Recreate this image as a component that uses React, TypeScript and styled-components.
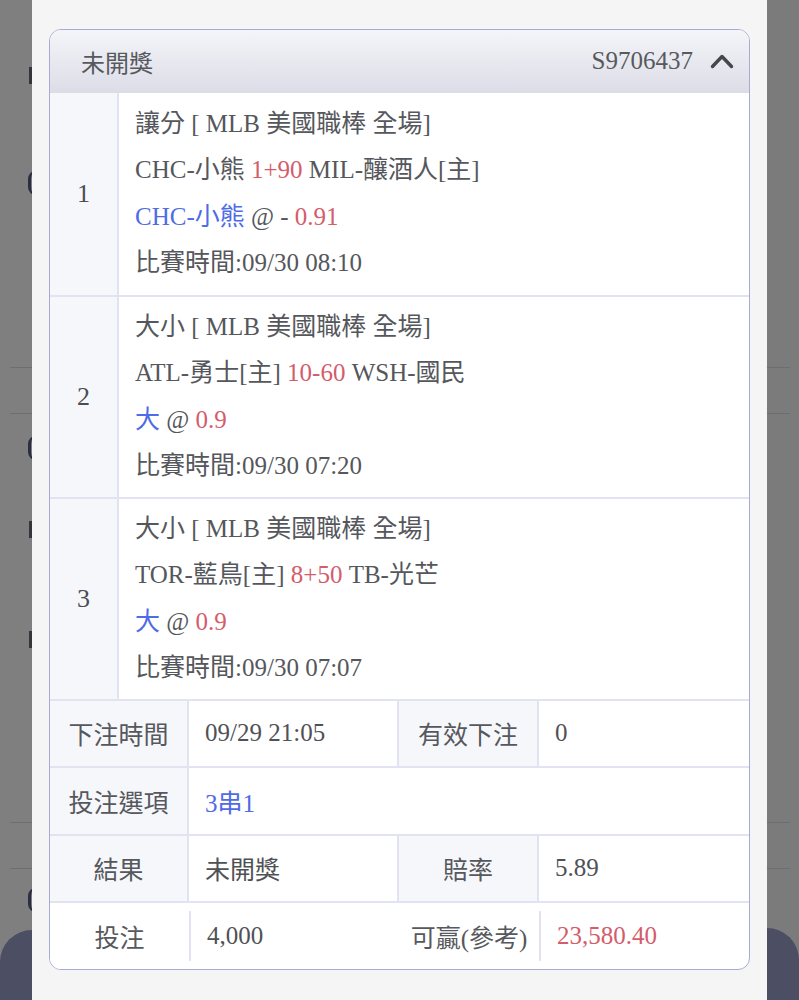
import React from "react";
import styled, { createGlobalStyle } from "styled-components";

const GlobalStyle = createGlobalStyle`
  html, body {
    margin: 0;
    padding: 0;
  }

  body {
    font-family: "Liberation Serif", "Noto Sans CJK TC", serif;
    background: #7e7e7e;
  }

  * {
    box-sizing: border-box;
  }
`;

const RED = "#d35d6b";
const BLUE = "#4f6be6";
const TEXT = "#55575c";
const LINE = "#e1e3f3";

const StyledPage = styled.div`
  display: flex;
  height: 1000px;
  overflow: hidden;
`;

const StyledStrip = styled.div<{ $side: "left" | "right" }>`
  width: 32px;
  flex-shrink: 0;
  display: flex;
  flex-direction: column;
  overflow: hidden;
  background: ${(p) => (p.$side === "left" ? "#7f7f7f" : "#7b7b7c")};
`;

/* bits of the page under the overlay, peeking out beside the sheet */
const StyledPeek = styled.div<{ $gap: number; $kind: "stem" | "curve" }>`
  margin-top: ${(p) => p.$gap}px;
  margin-left: ${(p) => (p.$kind === "curve" ? "28px" : "29px")};
  flex-shrink: 0;
  width: ${(p) => (p.$kind === "curve" ? "8px" : "3px")};
  height: ${(p) => (p.$kind === "curve" ? "24px" : "17px")};
  border-left: ${(p) =>
    p.$kind === "curve" ? "3px solid #2b2e40" : "none"};
  border-radius: ${(p) => (p.$kind === "curve" ? "12px 0 0 12px" : "0")};
  background: ${(p) => (p.$kind === "curve" ? "transparent" : "#34353a")};
`;

const StyledBand = styled.div<{ $gap: number; $side: "left" | "right" }>`
  margin-top: ${(p) => p.$gap}px;
  height: 47px;
  flex-shrink: 0;
  border-top: 1px solid #6d6e75;
  border-bottom: 1px solid #6d6e75;
  margin-left: ${(p) => (p.$side === "left" ? "10px" : "0")};
  margin-right: ${(p) => (p.$side === "right" ? "9px" : "0")};
`;

const StyledBackButton = styled.div<{ $side: "left" | "right"; $height: number }>`
  margin-top: auto;
  height: ${(p) => p.$height}px;
  flex-shrink: 0;
  background: #4c4f64;
  border-top-left-radius: ${(p) => (p.$side === "left" ? "40px" : "0")};
  border-top-right-radius: ${(p) => (p.$side === "right" ? "40px" : "0")};
`;

const StyledSheet = styled.div`
  flex: 1;
  background: #f5f5f6;
  padding: 29px 17px 0 17px;
`;

const StyledCard = styled.div`
  background: #fff;
  border: 1.5px solid #a6aad5;
  border-radius: 12px;
  overflow: hidden;
  color: ${TEXT};
  font-size: 25px;
`;

const StyledHeader = styled.div`
  height: 62.5px;
  display: flex;
  align-items: center;
  justify-content: space-between;
  padding: 0 15px 0 31px;
  background: linear-gradient(180deg, #f4f5f8 0%, #e8e9f0 50%, #dbdce6 100%);
`;

const StyledHeaderTitle = styled.span`
  font-size: 24px;
  color: #57595e;
`;

const StyledHeaderRight = styled.div`
  display: flex;
  align-items: center;
  gap: 17px;
  color: #57595e;
  font-size: 25px;
`;

const StyledChevron = styled.svg`
  width: 24px;
  height: 16px;
  display: block;
`;

const StyledLegRow = styled.div<{ $first?: boolean }>`
  display: grid;
  grid-template-columns: 69px 1fr;
  border-top: ${(p) => (p.$first ? "none" : `2px solid ${LINE}`)};
`;

const StyledLegIndex = styled.div`
  display: flex;
  align-items: center;
  justify-content: center;
  background: #f6f7fb;
  border-right: 2px solid ${LINE};
  font-size: 26px;
  color: #4c4d52;
`;

const StyledLegBody = styled.div<{ $first?: boolean }>`
  padding: ${(p) => (p.$first ? "8px" : "7px")} 0 ${(p) => (p.$first ? "8px" : "7px")} 16px;
`;

const StyledLine = styled.div`
  line-height: 46.5px;
  height: 46.5px;
  white-space: nowrap;
`;

const StyledTone = styled.span<{ $tone: "red" | "blue" }>`
  color: ${(p) => (p.$tone === "red" ? RED : BLUE)};
`;

const StyledInfoRow = styled.div`
  display: grid;
  grid-template-columns: 139px 210px 140px 1fr;
  height: 67.5px;
  border-top: 2px solid ${LINE};
`;

const StyledLabel = styled.div<{ $plain?: boolean }>`
  display: flex;
  align-items: center;
  justify-content: center;
  white-space: nowrap;
  background: ${(p) => (p.$plain ? "#fff" : "#f6f7fb")};
  border-right: ${(p) => (p.$plain ? "none" : `2px solid ${LINE}`)};
  color: #56585d;
`;

const StyledValue = styled.div<{ $plain?: boolean; $span?: number; $last?: boolean }>`
  display: flex;
  align-items: center;
  padding-left: 16px;
  white-space: nowrap;
  grid-column: span ${(p) => p.$span ?? 1};
  border-left: ${(p) => (p.$plain ? `2px solid ${LINE}` : "none")};
  margin: ${(p) => (p.$plain ? "8px 0" : "0")};
  border-right: ${(p) =>
    p.$last || p.$plain ? "none" : `2px solid ${LINE}`};
  color: #505156;
`;

type Leg = {
  index: number;
  market: string;
  home: string;
  line: string;
  away: string;
  pick: string;
  at: string;
  odds: string;
  time: string;
};

const legs: Leg[] = [
  {
    index: 1,
    market: "讓分 [ MLB 美國職棒 全場]",
    home: "CHC-小熊",
    line: "1+90",
    away: "MIL-釀酒人[主]",
    pick: "CHC-小熊",
    at: "@ - ",
    odds: "0.91",
    time: "比賽時間:09/30 08:10",
  },
  {
    index: 2,
    market: "大小 [ MLB 美國職棒 全場]",
    home: "ATL-勇士[主]",
    line: "10-60",
    away: "WSH-國民",
    pick: "大",
    at: "@ ",
    odds: "0.9",
    time: "比賽時間:09/30 07:20",
  },
  {
    index: 3,
    market: "大小 [ MLB 美國職棒 全場]",
    home: "TOR-藍鳥[主]",
    line: "8+50",
    away: "TB-光芒",
    pick: "大",
    at: "@ ",
    odds: "0.9",
    time: "比賽時間:09/30 07:07",
  },
];

const LeftStrip: React.FC = () => (
  <StyledStrip $side="left">
    <StyledPeek $gap={67} $kind="stem" />
    <StyledPeek $gap={87} $kind="curve" />
    <StyledBand $gap={172} $side="left" />
    <StyledPeek $gap={22} $kind="curve" />
    <StyledPeek $gap={61} $kind="stem" />
    <StyledPeek $gap={93} $kind="stem" />
    <StyledBand $gap={174} $side="left" />
    <StyledPeek $gap={19} $kind="curve" />
    <StyledBackButton $side="left" $height={70} />
  </StyledStrip>
);

const RightStrip: React.FC = () => (
  <StyledStrip $side="right">
    <StyledBand $gap={367} $side="right" />
    <StyledBand $gap={408} $side="right" />
    <StyledBackButton $side="right" $height={72} />
  </StyledStrip>
);

export default function App() {
  return (
    <>
      <GlobalStyle />
      <StyledPage>
        <LeftStrip />
        <StyledSheet>
          <StyledCard>
            <StyledHeader>
              <StyledHeaderTitle>未開獎</StyledHeaderTitle>
              <StyledHeaderRight>
                <span>S9706437</span>
                <StyledChevron viewBox="0 0 24 16">
                  <path
                    d="M2.5 13.5L12 3.5L21.5 13.5"
                    fill="none"
                    stroke="#45474d"
                    strokeWidth="3.4"
                    strokeLinecap="round"
                    strokeLinejoin="round"
                  />
                </StyledChevron>
              </StyledHeaderRight>
            </StyledHeader>

            {legs.map((leg, i) => (
              <StyledLegRow key={leg.index} $first={i === 0}>
                <StyledLegIndex>{leg.index}</StyledLegIndex>
                <StyledLegBody $first={i === 0}>
                  <StyledLine>{leg.market}</StyledLine>
                  <StyledLine>
                    {leg.home} <StyledTone $tone="red">{leg.line}</StyledTone>{" "}
                    {leg.away}
                  </StyledLine>
                  <StyledLine>
                    <StyledTone $tone="blue">{leg.pick}</StyledTone> {leg.at}
                    <StyledTone $tone="red">{leg.odds}</StyledTone>
                  </StyledLine>
                  <StyledLine>{leg.time}</StyledLine>
                </StyledLegBody>
              </StyledLegRow>
            ))}

            <StyledInfoRow>
              <StyledLabel>下注時間</StyledLabel>
              <StyledValue>09/29 21:05</StyledValue>
              <StyledLabel>有效下注</StyledLabel>
              <StyledValue $last>0</StyledValue>
            </StyledInfoRow>
            <StyledInfoRow>
              <StyledLabel>投注選項</StyledLabel>
              <StyledValue $span={3} $last>
                <StyledTone $tone="blue">3串1</StyledTone>
              </StyledValue>
            </StyledInfoRow>
            <StyledInfoRow>
              <StyledLabel>結果</StyledLabel>
              <StyledValue>未開獎</StyledValue>
              <StyledLabel>賠率</StyledLabel>
              <StyledValue $last>5.89</StyledValue>
            </StyledInfoRow>
            <StyledInfoRow>
              <StyledLabel $plain>投注</StyledLabel>
              <StyledValue $plain>4,000</StyledValue>
              <StyledLabel $plain>可贏(參考)</StyledLabel>
              <StyledValue $plain $last>
                <StyledTone $tone="red">23,580.40</StyledTone>
              </StyledValue>
            </StyledInfoRow>
          </StyledCard>
        </StyledSheet>
        <RightStrip />
      </StyledPage>
    </>
  );
}
